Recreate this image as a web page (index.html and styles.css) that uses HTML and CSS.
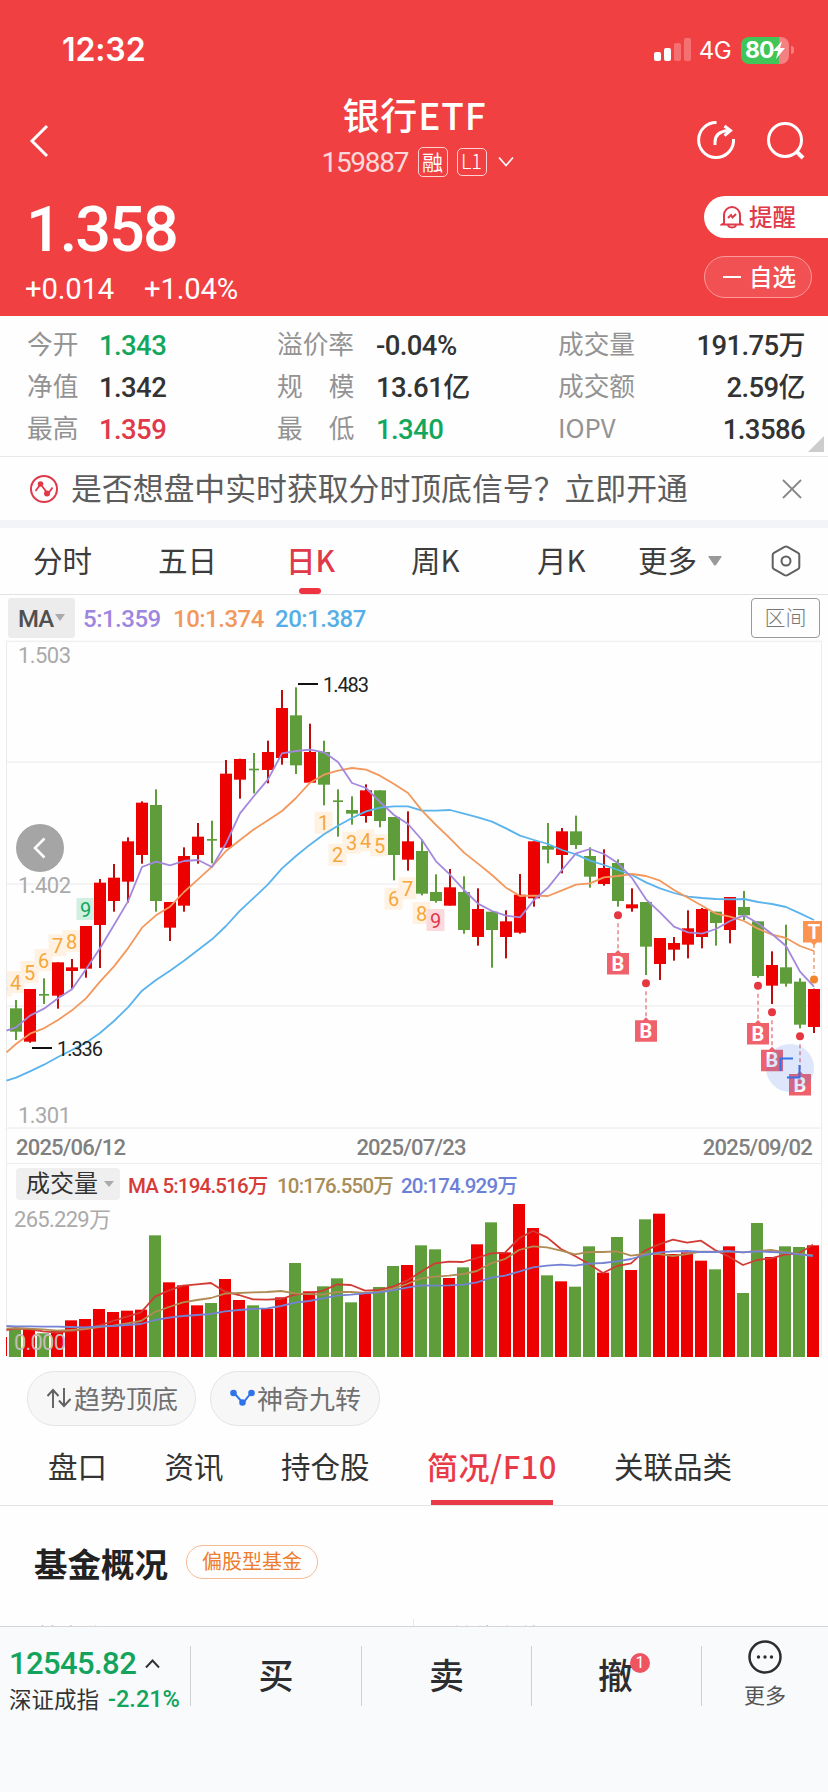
FILE: index.html
```html
<!DOCTYPE html>
<html lang="zh-CN">
<head>
<meta charset="utf-8">
<title>银行ETF 159887</title>
<link rel="stylesheet" href="styles.css">
</head>
<body>
<header class="hero">
  <div class="status">
    <span class="clock">12:32</span>
    <svg class="signal" width="38" height="24" viewBox="0 0 38 24" fill="#fff"><rect y="14" width="7" height="9" rx="2"/><rect x="10" y="10" width="7" height="13" rx="2"/><rect x="20" y="5" width="7" height="18" rx="2" opacity=".25"/><rect x="30" width="7" height="23" rx="2" opacity=".25"/></svg>
    <span class="network">4G</span>
    <div class="battery"><span>80</span><svg width="13" height="18" viewBox="0 0 13 18"><path d="M9 0 0 10h5L3 18 12 7H7z" fill="#fff"/></svg></div>
    <i class="nub"></i>
  </div>
  <div class="titlebar">
    <svg class="back" width="22" height="36" viewBox="0 0 22 36"><path d="M19 3 4 18l15 15" fill="none" stroke="#fff" stroke-width="3"/></svg>
    <div class="title">
      <h1>银行ETF</h1>
      <div class="code"><span class="num">159887</span><b>融</b><b class="l1">L1</b><svg width="16" height="12" viewBox="0 0 16 12"><path d="m1 1.500 7 8 7-8" fill="none" stroke="#fff" stroke-width="1.700"/></svg></div>
    </div>
    <div class="actions">
      <svg width="40" height="40" viewBox="0 0 40 40" fill="none" stroke="#fff" stroke-width="3"><path d="M20.500 2.500H20a17.500 17.500 0 1 0 17.500 19.500V19"/><path d="M19 25v-3c0-7 4-10.500 13-11.500"/><path d="m28.500 6 6 4.500-6 5.200"/></svg>
      <svg width="40" height="40" viewBox="0 0 40 40" fill="none" stroke="#fff" stroke-width="3"><circle cx="20" cy="20" r="16.500"/><path d="m31 31 7 7" stroke-width="4"/></svg>
    </div>
  </div>
  <div class="quote">
    <div>
      <div class="price num">1.358</div>
      <div class="change num"><span>+0.014</span><span>+1.04%</span></div>
    </div>
    <div class="pills">
      <div class="pill remind"><svg width="24" height="24" viewBox="0 0 24 24" fill="none" stroke="#e0394a" stroke-width="2"><path d="M4 18V10a8 8 0 0 1 16 0v8l2 1.500H2L4 18zM8 20.500c1 2.500 7 2.500 8 0M8 13l3-3 1.500 2.500L16 9"/></svg><span>提醒</span></div>
      <div class="pill watch"><i></i><span>自选</span></div>
    </div>
  </div>
</header>

<section class="stats">
  <span>今开</span><b class="green">1.343</b><span>溢价率</span><b>-0.04%</b><span>成交量</span><b class="right">191.75<em>万</em></b>
  <span>净值</span><b>1.342</b><span class="wide">规<i></i>模</span><b>13.61<em>亿</em></b><span>成交额</span><b class="right">2.59<em>亿</em></b>
  <span>最高</span><b class="red">1.359</b><span class="wide">最<i></i>低</span><b class="green">1.340</b><span>IOPV</span><b class="right">1.3586</b>
  <svg class="corner" width="16" height="16"><path d="M16 0v16H0z" fill="#ccc"/></svg>
</section>

<section class="notice">
  <svg width="30" height="30" viewBox="0 0 30 30" fill="none" stroke="#e0394a" stroke-width="2"><circle cx="15" cy="15" r="13"/><path d="m6.500 17 4.500-6M13 12l4.500 6M20 18.500l3.500-5" stroke-width="1.800"/><circle cx="11.500" cy="10" r="1.800" fill="#e0394a"/><circle cx="18" cy="19.500" r="2" fill="#e0394a"/></svg>
  <p>是否想盘中实时获取分时顶底信号？立即开通</p>
  <svg width="20" height="20" viewBox="0 0 20 20"><path d="m1 1 18 18M19 1 1 19" stroke="#888" stroke-width="1.800"/></svg>
</section>

<nav class="periods">
  <span>分时</span><span>五日</span><span class="on">日K</span><span>周K</span><span>月K</span><span>更多</span>
  <svg class="tri" width="14" height="10"><path d="M1 0h12q1 0 .5 1L8 9q-1 1-2 0L.5 1Q0 0 1 0z" fill="#999"/></svg>
  <svg class="hex" width="30" height="32" viewBox="0 0 30 32" fill="none" stroke="#606060" stroke-width="2"><path d="M13.500 1.900Q15 1.200 16.500 1.900L27 7.800q1.300.8 1.300 2.200v12q0 1.400-1.300 2.200l-10.500 5.900q-1.500.7-3 0L3 24.200Q1.700 23.400 1.700 22V10q0-1.400 1.300-2.200z"/><circle cx="15" cy="16" r="4.500"/></svg>
</nav>

<div class="ma-row">
  <div class="ma-box"><span>MA</span><svg width="10" height="8"><path d="M0 0h10L5 7z" fill="#aaa"/></svg></div>
  <span class="m5">5:1.359</span><span class="m10">10:1.374</span><span class="m20">20:1.387</span>
  <div class="range">区间</div>
</div>

<svg id="kline" class="kline" width="828" height="490" viewBox="0 0 828 490"></svg>
<div class="dates num"><span>2025/06/12</span><span class="mid">2025/07/23</span><span>2025/09/02</span></div>
<div class="vol-head">
  <div class="vol-box">成交量<svg width="10" height="7"><path d="M0 0h10L5 6z" fill="#aaa"/></svg></div>
  <span class="v5">MA 5:194.516万</span><span class="v10">10:176.550万</span><span class="v20">20:174.929万</span>
</div>
<svg id="volume" class="volume" width="828" height="153" viewBox="0 0 828 153"></svg>

<div class="chips">
  <div class="chip"><svg width="26" height="24" viewBox="0 0 26 24" fill="none" stroke="#606060" stroke-width="1.900"><path d="M7 22V4M1.500 10 7 4l5.500 6M18 2v18M13 14.500l5 5.500 6.500-7"/></svg>趋势顶底</div>
  <div class="chip second"><svg width="25" height="18" viewBox="0 0 25 18" fill="#2f73ea" stroke="#2f73ea" stroke-width="2"><path d="m4 4 9 10 8-10" fill="none"/><circle cx="3.500" cy="4" r="2.300"/><circle cx="12.500" cy="13.500" r="2.300"/><circle cx="21.500" cy="4" r="2.300"/></svg>神奇九转</div>
</div>
<nav class="sections"><span>盘口</span><span>资讯</span><span>持仓股</span><span class="on">简况/F10</span><span>关联品类</span></nav>
<section class="fund">
  <div class="fund-head"><h2>基金概况</h2><span class="tag">偏股型基金</span></div>
  <div class="fund-cells"><span>基金代码</span><span>单位净值</span></div>
</section>

<footer class="tradebar">
  <div class="index">
    <div class="index-value num">12545.82<svg width="15" height="10" viewBox="0 0 15 10"><path d="m1 8.500 6.500-7 6.500 7" fill="none" stroke="#333" stroke-width="1.900"/></svg></div>
    <div class="index-name">深证成指<span class="num">-2.21%</span></div>
  </div>
  <div class="act">买</div>
  <div class="act">卖</div>
  <div class="act"><span class="cancel">撤<i>1</i></span></div>
  <div class="more"><svg width="36" height="36" viewBox="0 0 36 36"><circle cx="18" cy="18" r="15.500" fill="none" stroke="#2c2d30" stroke-width="2.500"/><g fill="#2c2d30"><circle cx="11.500" cy="18" r="1.700"/><circle cx="18" cy="18" r="1.700"/><circle cx="24.500" cy="18" r="1.700"/></g></svg>更多</div>
</footer>
<script src="chart.js"></script>
</body>
</html>
```
FILE: styles.css
```css
* { box-sizing: border-box; }
body { margin: 0; width: 828px; height: 1792px; overflow: hidden; background: #fefefe; font-family: "Noto Sans CJK SC", sans-serif; color: #333; }
h1, h2, p { margin: 0; }
b, em, i { font-style: normal; font-weight: inherit; }
svg { display: block; flex: none; }
span { white-space: nowrap; }
.num { font-family: Roboto, "Noto Sans CJK SC", sans-serif; }
.green { color: #12a75c; }
.red { color: #e0394a; }

.hero { height: 316px; background: #f04042; color: #fff; }
.status { display: flex; align-items: center; height: 100px; padding: 0 34px 0 62px; }
.clock { font: 600 32px/40px Inter, sans-serif; letter-spacing: -.1px; margin-right: auto; }
.signal { margin-right: 7px; }
.network { font: 400 24px/30px Inter, sans-serif; margin-right: 10px; letter-spacing: -.6px; padding-top: 1px; }
.battery { display: flex; align-items: center; width: 48px; height: 27px; padding-left: 4px; border-radius: 8px; background: linear-gradient(90deg, #3fc558 38px, #f58081 38px); font: 700 23px/27px Inter, sans-serif; letter-spacing: -1px; }
.nub { width: 3px; height: 8px; margin-left: 2px; border-radius: 0 3px 3px 0; background: #f58081; }
.titlebar { display: grid; grid-template-columns: 200px 1fr 200px; height: 92px; padding: 0 23px 0 28px; }
.back { margin-top: 23px; }
.title { display: flex; flex-direction: column; align-items: center; padding-left: 2px; }
.title h1 { font-size: 37px; line-height: 44px; font-weight: 500; letter-spacing: .9px; height: 46px; margin-top: -8px; margin-bottom: 1px; margin-left: -6px; }
.code { display: flex; align-items: center; height: 46px; font-size: 28px; letter-spacing: -1.300px; }
.code .num { opacity: .8; width: 87px; }
.code b { width: 30px; height: 30px; margin-left: 9px; border: 1.500px solid #ffd0d0; border-radius: 5px; font-size: 21px; line-height: 26px; text-align: center; letter-spacing: 0; font-weight: 400; }
.code .l1 { height: 28px; font-size: 20px; line-height: 24px; font-weight: 300; }
.code svg { margin-left: 11px; }
.actions { display: flex; justify-content: flex-end; gap: 29px; padding-top: 20px; }
.quote { display: flex; justify-content: space-between; height: 124px; padding-left: 25px; }
.price { font-size: 63px; line-height: 74px; font-weight: 500; letter-spacing: -2px; margin: 1px 0 0 1px; }
.change { display: flex; gap: 30px; font-size: 29.300px; line-height: 34px; margin-top: 5px; font-weight: 400; letter-spacing: -.2px; }
.pills { width: 124px; display: flex; flex-direction: column; gap: 18px; padding-top: 4px; }
.pill { display: flex; align-items: center; height: 42px; font-size: 23.500px; font-weight: 500; }
.pill span { margin-top: -3px; }
.remind { background: #fff; color: #e0394a; border-radius: 21px 0 0 21px; padding-left: 16px; gap: 5px; }
.watch { width: 108px; border: 1px solid #fa9a9b; background: #f15153; border-radius: 21px; padding-left: 18px; gap: 8px; }
.watch i { width: 18px; height: 2px; background: #fff; }

.stats { position: relative; display: grid; grid-template-columns: 72px 178px 99px 182px 100px 147px; grid-auto-rows: 42px; height: 141px; padding: 7px 23px 0 27px; align-items: center; border-bottom: 1px solid #e9e9e9; }
.stats > span { font-size: 25.700px; line-height: 38px; color: #939393; font-weight: 400; margin-top: -2px; }
.stats .wide { display: flex; }
.wide i { width: 26px; }
.stats b { font: 500 27.500px/38px Roboto, "Noto Sans CJK SC", sans-serif; letter-spacing: -.6px; padding-top: 3px; }
.stats em { font-size: 27px; }
.stats .right { text-align: right; }
.corner { position: absolute; right: 4px; bottom: 4px; }

.notice { display: flex; align-items: center; height: 71px; padding: 0 26px 0 29px; border-bottom: 8px solid #f2f4f8; }
.notice p { flex: 1; margin: -3px 0 0 12px; font-size: 30.850px; line-height: 44px; color: #5c5c5c; white-space: nowrap; }

.periods { display: grid; grid-template-columns: 125px 128px 125px 126px 101px 70px 1fr 30px; align-items: center; height: 67px; padding: 0 27px 0 33px; border-bottom: 1px solid #e2e2e2; font-size: 29.500px; color: #3c3c3c; }
.periods span { height: 66px; line-height: 63px; }
.periods .on { position: relative; color: #e0394a; font-weight: 500; }
.periods .on::after { content: ""; position: absolute; left: 13px; bottom: 0; width: 22px; height: 6px; border-radius: 3px; background: #f03340; }

.ma-row { display: flex; align-items: center; height: 45px; padding: 0 8px; font: 500 24px/30px Roboto, sans-serif; letter-spacing: -.5px; }
.ma-row > span { padding-top: 2px; }
.ma-box { display: flex; align-items: center; gap: 2px; width: 67px; height: 40px; margin-right: 8px; padding-left: 10px; border-radius: 3px; background: #ececec; color: #505050; }
.ma-box span { font-size: 24px; letter-spacing: -1px; padding-top: 2px; }
.m5 { width: 90px; color: #9d86e0; }
.m10 { width: 102px; color: #f2985c; }
.m20 { color: #55aee8; }
.range { width: 69px; height: 40px; margin-left: auto; border: 1px solid #999; border-radius: 4px; font: 300 21px/35px "Noto Sans CJK SC", sans-serif; letter-spacing: 0; color: #777; text-align: center; }

.kline text, .volume text { font-family: Roboto, "Noto Sans CJK SC", sans-serif; }
.dates { display: flex; justify-content: space-between; height: 34px; margin: 0 6px; padding: 0 9px; border: solid #ededed; border-width: 0 1px 1px; font-size: 22px; line-height: 35px; font-weight: 500; color: #808080; letter-spacing: -.8px; }
.mid { margin-right: 6px; }
.vol-head { display: flex; align-items: center; height: 40px; margin: 0 6px; padding-left: 9px; border: solid #ededed; border-width: 0 1px; font: 500 20.500px/30px Roboto, "Noto Sans CJK SC", sans-serif; letter-spacing: -.8px; }
.vol-head > span { padding-top: 3px; }
.vol-box { display: flex; align-items: center; gap: 6px; width: 104px; height: 32px; padding-left: 10px; margin-right: 8px; border-radius: 4px; background: #efefef; font-size: 24px; line-height: 28px; font-weight: 400; letter-spacing: 0; color: #333; }
.v5 { width: 149px; color: #d63b38; }
.v10 { width: 124px; color: #a98d58; }
.v20 { color: #6d80d8; }

.chips { display: flex; gap: 14px; height: 69px; padding: 14px 27px 0; }
.chip { display: flex; align-items: center; width: 169px; height: 55px; padding: 0 0 1px 18px; gap: 2px; border: 1px solid #e4e4e4; border-radius: 28px; background: #f7f7f7; font-size: 26px; line-height: 50px; color: #707070; white-space: nowrap; }
.second { width: 170px; padding-left: 19px; }
.sections { display: flex; height: 80px; padding-left: 48px; border-bottom: 1px solid #e4e4e4; font-size: 29.500px; line-height: 79px; color: #333; }
.sections span { margin-right: 57.500px; }
.sections .on { position: relative; color: #e93a48; font-weight: 500; font-size: 31px; letter-spacing: .5px; margin-right: 57px; }
.sections .on::after { content: ""; position: absolute; left: 4px; right: 4px; bottom: 0; height: 5px; background: #e93a48; }
.fund { height: 120px; overflow: hidden; }
.fund-head { display: flex; align-items: center; height: 113px; padding: 1px 0 0 34px; }
h2 { font-size: 33.500px; line-height: 48px; font-weight: 700; color: #222; margin-right: 18px; }
.tag { width: 132px; height: 34px; margin-top: -3px; border: 1px solid #f5bb93; border-radius: 17px; color: #ec7d31; font-size: 20px; line-height: 30px; text-align: center; }
.fund-cells { display: grid; grid-template-columns: 1fr 1fr; height: 7px; overflow: hidden; }
.fund-cells span { padding-left: 36px; font-size: 23px; line-height: 34px; height: 40px; margin-top: -1px; color: #999; border-right: 1px solid #e8e8e8; }
.fund-cells span:last-child { border-right: 0; }

.tradebar { display: grid; grid-template-columns: 190px 171px 170px 170px 127px; height: 167px; border-top: 1px solid #d5d5d7; background: #f9fafc; }
.index { padding: 19px 0 0 9px; height: 79px; }
.index-value { display: flex; align-items: center; gap: 9px; font-size: 31px; line-height: 36px; font-weight: 500; letter-spacing: -.6px; color: #12a45c; }
.index-name { display: flex; gap: 9px; font-size: 22.500px; line-height: 32px; }
.index-name .num { color: #12a45c; font-weight: 500; font-size: 23.500px; letter-spacing: 0; padding-top: 1px; }
.act, .more { margin-top: 19px; height: 60px; border-left: 1px solid #cfd0d3; }
.act { font-size: 35px; line-height: 55px; font-weight: 500; text-align: center; color: #2c2d30; }
.cancel { position: relative; left: -1px; }
.cancel i { position: absolute; left: 32px; top: 5px; width: 20px; height: 20px; border-radius: 50%; background: #ee5560; color: #fff; font: 400 16px/20px Roboto, sans-serif; }
.more { display: flex; flex-direction: column; align-items: center; font-size: 21px; line-height: 30px; color: #555; }
.more svg { margin: -7px 0 4px; }
```
FILE: chart.js
```js
// Vertical values are stored in thirds of a pixel; slots are 14px apart.
const NS = 'http://www.w3.org/2000/svg';
const RED = '#ec0000', GREEN = '#5f9d3b';

function add(parent, name, attrs, text) {
  const el = document.createElementNS(NS, name);
  for (const key in attrs) el.setAttribute(key, attrs[key]);
  if (text !== undefined) el.textContent = text;
  parent.appendChild(el);
}

function line(parent, startX, offset, values, color) {
  const points = values.map((v, i) => `${i ? startX + 14 * (i - 1) : 6.5},${(v - offset) / 3}`);
  add(parent, 'polyline', { points: points.join(' '), fill: 'none', stroke: color, 'stroke-width': 1.8, 'stroke-linejoin': 'round' });
}

const k = document.getElementById('kline');
for (const y of [4, 366, 732, 1098, 1464])
  add(k, 'rect', { x: 6, y: y / 3 - 0.7, width: 816, height: 1.5, fill: '#f0f0f0' });
for (const [y, t] of [[23, '1.503'], [253, '1.402'], [483, '1.301']])
  add(k, 'text', { x: 18, y, 'font-size': 22, fill: '#aaa', textLength: 53 }, t);

// Nine-turn count labels: slot, top, digit, colour, background
const counts = [[-0.9, 1003, 3], [0, 993, 4], [1, 963, 5], [2, 927, 6], [3, 883, 7], [4, 870, 8], [5, 774, 9, '#12a75c', '#d0f0e2'],
  [22, 515, 1], [23, 611, 2], [24, 575, 3], [25, 568, 4], [26, 583, 5], [27, 743, 6], [28, 712, 7], [29, 786, 8], [30, 807, 9, '#e0394a', '#fbd9dc']];
for (const [slot, top, digit, color = '#f5a73c', bg = '#fff2e2'] of counts) {
  const x = 15.5 + slot * 14, y = top / 3, left = Math.max(7, x - 9);
  add(k, 'rect', { x: left, y, width: x + 9 - left, height: 22, fill: bg });
}
for (const [slot, top, digit, color = '#f5a73c'] of counts)
  add(k, 'text', { x: 15.5 + slot * 14, y: top / 3 + 18.5, 'font-size': 20, fill: color, 'text-anchor': 'middle' }, digit);
add(k, 'rect', { x: 0, y: 0, width: 6, height: 490, fill: '#fefefe' });
add(k, 'path', { d: 'M6.500 1V490M821.500 1V490', stroke: '#ebebeb' });

// Candles: colour, high, body top, body bottom, low
const candles = `G1080,1105,1175,1200 R1047,1047,1205,1208 G1015,1062,1067,1092 R967,967,1067,1106 R957,982,993,1046 R858,858,986,1013
R717,728,855,984 R672,713,783,815 R592,604,725,788 R484,488,645,671 G448,495,783,815 R786,786,863,903 R622,648,797,815 R549,590,645,671
G542,597,602,670 R360,401,623,623 R356,357,419,476 G339,386,391,460 R302,336,390,430 R150,204,354,374 G142,226,376,402 R251,336,428,428
G302,336,434,496 G448,481,486,590 G469,510,521,554 R433,451,528,548 G451,451,543,562 G531,531,645,721 R514,604,659,692 G598,633,761,766
G703,756,783,788 R687,742,797,797 G709,756,870,881 R745,807,891,917 G815,815,870,983 R811,844,891,955 R702,764,878,881 R604,604,775,800
G549,618,629,670 R564,574,645,700 G527,574,615,627 G622,648,710,743 R628,684,732,737 G658,669,783,800 R745,793,805,815 G786,786,920,1005
R894,894,972,1020 R891,909,929,962 R811,865,914,955 R804,807,891,925 G815,815,849,917 R771,771,870,910 G753,801,826,840 G844,844,1008,1013
R934,975,1037,1092 G854,982,1031,1040 G1015,1025,1154,1165 R1046,1047,1161,1179`.split(/\s+/);
candles.forEach((c, i) => {
  const [hi, top, bottom, lo] = c.slice(1).split(',').map(v => v / 3);
  const up = c[0] === 'R', x = 16 + 14 * i, w = bottom - top < 2 ? 10 : 12;
  add(k, 'rect', { x: x - 1, y: hi, width: 2, height: lo - hi, fill: up ? '#bd0e0e' : GREEN });
  add(k, 'rect', { x: x - w / 2, y: top, width: w, height: bottom - top, fill: up ? RED : GREEN });
});

line(k, 16, 0, [1322, 1313, 1294, 1274, 1251, 1230, 1208, 1179, 1143, 1102, 1052, 1020, 992, 962, 930, 898, 858, 812, 773, 733, 685, 648, 614, 583, 557, 534, 514, 503, 499, 499, 512, 512, 510, 521, 532, 545, 565, 587, 600, 612, 630, 643, 662, 675, 690, 705, 727, 745, 759, 770, 774, 777, 778, 777, 786, 792, 801, 820, 840], '#5ab3ec');
line(k, 16, 0, [1237, 1212, 1181, 1165, 1140, 1111, 1075, 1025, 979, 925, 863, 826, 800, 756, 718, 680, 633, 600, 568, 541, 513, 474, 428, 404, 392, 384, 389, 407, 432, 459, 512, 555, 595, 638, 671, 705, 743, 768, 767, 768, 751, 734, 730, 712, 708, 702, 708, 722, 750, 773, 797, 821, 830, 843, 866, 884, 894, 918, 933], '#f2985c');
line(k, 16, 0, [1172, 1162, 1127, 1106, 1075, 1048, 988, 925, 855, 784, 681, 665, 676, 663, 660, 681, 610, 520, 468, 418, 340, 333, 329, 337, 366, 429, 444, 486, 525, 552, 600, 664, 704, 750, 791, 813, 827, 832, 780, 743, 690, 640, 627, 642, 670, 714, 778, 817, 860, 877, 881, 867, 843, 826, 850, 882, 918, 995, 1040], '#a488dc');

add(k, 'path', { d: 'M298 44H318M32 408H52', stroke: '#111', 'stroke-width': 2 });
add(k, 'text', { x: 323, y: 52, 'font-size': 20, fill: '#222', textLength: 46 }, '1.483');
add(k, 'text', { x: 57, y: 416, 'font-size': 20, fill: '#222', textLength: 46 }, '1.336');

// Buy markers: slot, dot, box top
for (const [slot, dot, top] of [[43, 826, 939], [45, 1030, 1141], [53, 1037, 1149], [54, 1117, 1229], [56, 1189, 1302]]) {
  const x = 16 + slot * 14, y = top / 3;
  add(k, 'path', { d: `M${x} ${dot / 3 + 8}V${y - 2}`, stroke: '#e8858c', 'stroke-width': 1.5, 'stroke-dasharray': '4 3' });
  add(k, 'circle', { cx: x, cy: dot / 3, r: 4, fill: '#e63642' });
  add(k, 'path', { d: `M${x - 11} ${y}h8l3-3 3 3h8v21.500h-22z`, fill: '#ef626c' });
  add(k, 'text', { x, y: y + 17.5, 'font-size': 20, 'font-weight': 700, fill: '#fff', 'text-anchor': 'middle' }, 'B');
}
add(k, 'path', { d: 'M814 304V333', stroke: '#e8a070', 'stroke-width': 1.5, 'stroke-dasharray': '4 3' });
add(k, 'circle', { cx: 814, cy: 339.5, r: 4, fill: '#f5832b' });
add(k, 'path', { d: 'M803 281H822V302.500H817L814 305.500 811 302.500H803z', fill: '#fb9450' });
add(k, 'text', { x: 814, y: 298.5, 'font-size': 20, 'font-weight': 700, fill: '#fff', 'text-anchor': 'middle' }, 'T');
add(k, 'circle', { cx: 790, cy: 428, r: 24, fill: '#4a7cf0', opacity: .18 });
add(k, 'path', { d: 'M780.500 431V418.500H793M787 437.500H799.500V425', fill: 'none', stroke: '#3670e6', 'stroke-width': 2 });

add(k, 'circle', { cx: 40, cy: 208, r: 24, fill: '#a5a5a5' });
add(k, 'path', { d: 'M44.500 198.500 35 208l9.500 9.500', fill: 'none', stroke: '#fff', 'stroke-width': 2.5 });

const v = document.getElementById('volume');
add(v, 'path', { d: 'M6.500 0V152M821.500 0V152', stroke: '#ebebeb' });
add(v, 'text', { x: 14, y: 23, 'font-size': 22, fill: '#aaa', textLength: 97 }, '265.229万');
const tops = [628, 628, 640, 632, 601, 597, 567, 576, 572, 569, 346, 487, 496, 556, 549, 477, 540, 556, 566, 532, 429, 514, 499, 475, 547, 518, 501, 438, 435, 376, 388, 474, 442, 373, 307, 397, 249, 324, 466, 484, 500, 379, 458, 351, 450, 298, 281, 402, 397, 422, 448, 379, 519, 309, 411, 379, 381, 376];
const colors = 'GRGRRRRRRRGRRRGRRGRRGRGGGRGGRGGRGRGRRRGRGGRGRGRRRRGRGGRGGR';
add(v, 'rect', { x: 6, y: 133, width: 1, height: 19, fill: RED });
tops.forEach((t, i) => add(v, 'rect', { x: 9 + 14 * i, y: (t - 255) / 3 + 1, width: 12, height: (711 - t) / 3, fill: colors[i] === 'R' ? RED : GREEN }));
line(v, 15, 252, [630, 626, 627, 634, 638, 633, 627, 617, 603, 590, 577, 530, 511, 497, 493, 489, 515, 525, 538, 539, 537, 524, 520, 512, 493, 495, 512, 510, 500, 482, 455, 430, 425, 426, 414, 400, 398, 355, 333, 352, 387, 408, 432, 459, 438, 430, 392, 373, 359, 368, 362, 390, 410, 435, 420, 415, 404, 400, 374], '#d23a34');
line(v, 15, 252, [626, 624, 626, 628, 632, 630, 627, 621, 617, 610, 603, 576, 561, 547, 540, 534, 521, 519, 517, 516, 513, 520, 522, 524, 516, 516, 519, 515, 506, 492, 475, 470, 467, 462, 453, 430, 417, 390, 379, 382, 392, 403, 396, 396, 394, 407, 402, 402, 408, 402, 395, 395, 395, 397, 393, 390, 397, 402, 406], '#b08c54');
line(v, 15, 252, [618, 619, 619, 620, 620, 621, 622, 619, 618, 615, 612, 600, 593, 588, 585, 582, 574, 570, 567, 565, 558, 548, 543, 535, 527, 524, 520, 517, 511, 503, 496, 497, 496, 494, 487, 473, 467, 455, 442, 437, 434, 437, 431, 429, 424, 417, 405, 397, 394, 393, 396, 396, 393, 397, 394, 396, 398, 403, 408], '#7482d4');
add(v, 'text', { x: 14, y: 146, 'font-size': 22, fill: '#c4bdb8', textLength: 52 }, '0.000');
```
